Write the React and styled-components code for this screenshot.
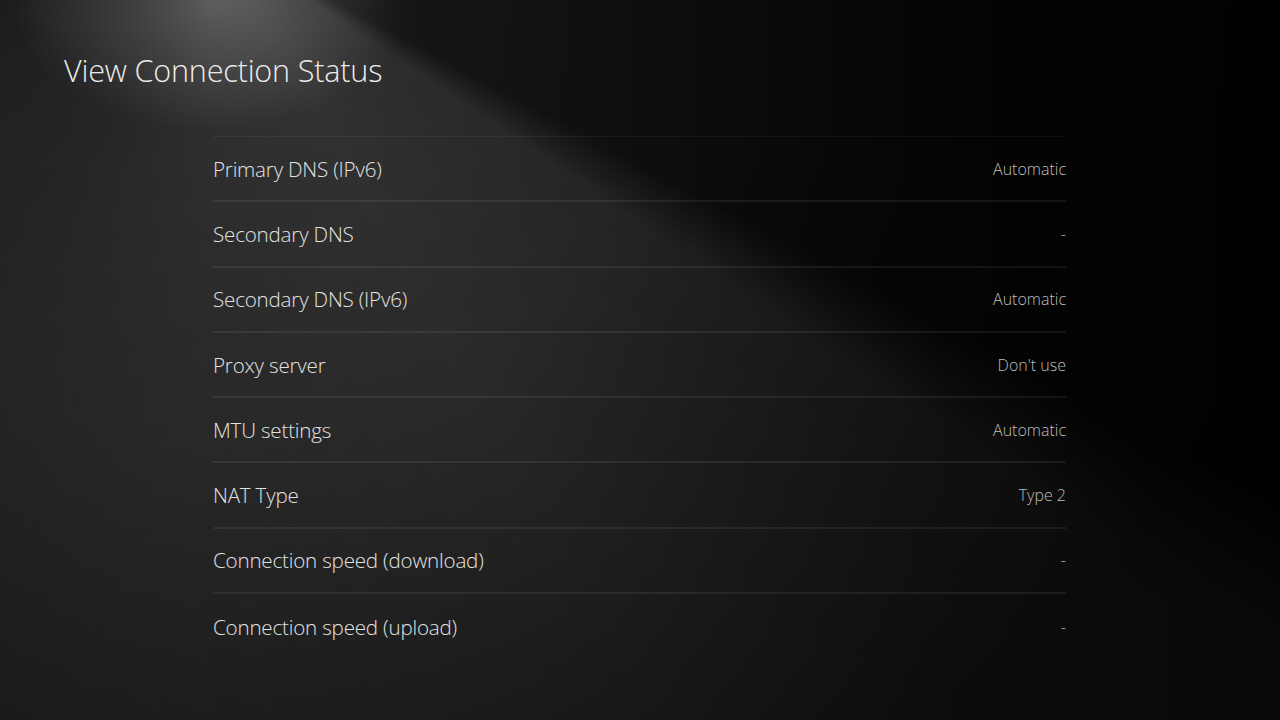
import styled, { createGlobalStyle } from "styled-components";

const GlobalStyle = createGlobalStyle`
  html, body {
    margin: 0;
    padding: 0;
    background: #0b0b0b;
  }
  * { box-sizing: border-box; }
`;

const rows = [
  { label: "Primary DNS (IPv6)", value: "Automatic" },
  { label: "Secondary DNS", value: "-" },
  { label: "Secondary DNS (IPv6)", value: "Automatic" },
  { label: "Proxy server", value: "Don't use" },
  { label: "MTU settings", value: "Automatic" },
  { label: "NAT Type", value: "Type 2" },
  { label: "Connection speed (download)", value: "-" },
  { label: "Connection speed (upload)", value: "-" },
];

export default function App() {
  return (
    <>
      <GlobalStyle />
      <Screen>
        <Title>View Connection Status</Title>
        <List>
          {rows.map((r) => (
            <Row key={r.label}>
              <Label>{r.label}</Label>
              <Value>{r.value}</Value>
            </Row>
          ))}
        </List>
      </Screen>
    </>
  );
}

const Screen = styled.div`
  width: 1280px;
  height: 720px;
  overflow: hidden;
  font-family: "Open Sans", "Noto Sans", sans-serif;
  font-weight: 300;
  color: #e6e6e6;
  padding: 50px 0 0 64px;
  display: flex;
  flex-direction: column;
  background:
    radial-gradient(ellipse 200px 130px at 210px 0px, rgba(255, 255, 255, 0.22), transparent 100%),
    radial-gradient(circle at 220px -60px, transparent 0, rgba(0, 0, 0, 0.2) 500px, rgba(0, 0, 0, 0.7) 1100px),
    conic-gradient(
      from 0deg at 220px -60px,
      rgba(0, 0, 0, 0) 0deg,
      rgba(0, 0, 0, 0) 118deg,
      rgba(255, 255, 255, 0.11) 124deg,
      rgba(255, 255, 255, 0.13) 150deg,
      rgba(255, 255, 255, 0.1) 185deg,
      rgba(255, 255, 255, 0.05) 215deg,
      rgba(0, 0, 0, 0) 260deg
    ),
    linear-gradient(to right, #1e1e1e 0%, #151515 40%, #070707 75%, #040404 100%);
`;

const Title = styled.h1`
  margin: 0;
  font-size: 30.6px;
  font-weight: 300;
  line-height: 40px;
  color: #ececec;
  letter-spacing: -0.2px;
`;

const List = styled.div`
  margin: 46px 0 0 149px;
  width: 853px;
  display: flex;
  flex-direction: column;
  border-top: 1px solid rgba(255, 255, 255, 0.05);
`;

const Row = styled.div`
  height: 65.3px;
  display: flex;
  align-items: center;
  justify-content: space-between;
  border-bottom: 2px solid rgba(255, 255, 255, 0.07);

  &:last-child {
    border-bottom: none;
  }
`;

const Label = styled.span`
  font-size: 20.6px;
  color: #e2e2e2;
  letter-spacing: -0.2px;
`;

const Value = styled.span`
  font-size: 16px;
  color: #bdbdbd;
`;
